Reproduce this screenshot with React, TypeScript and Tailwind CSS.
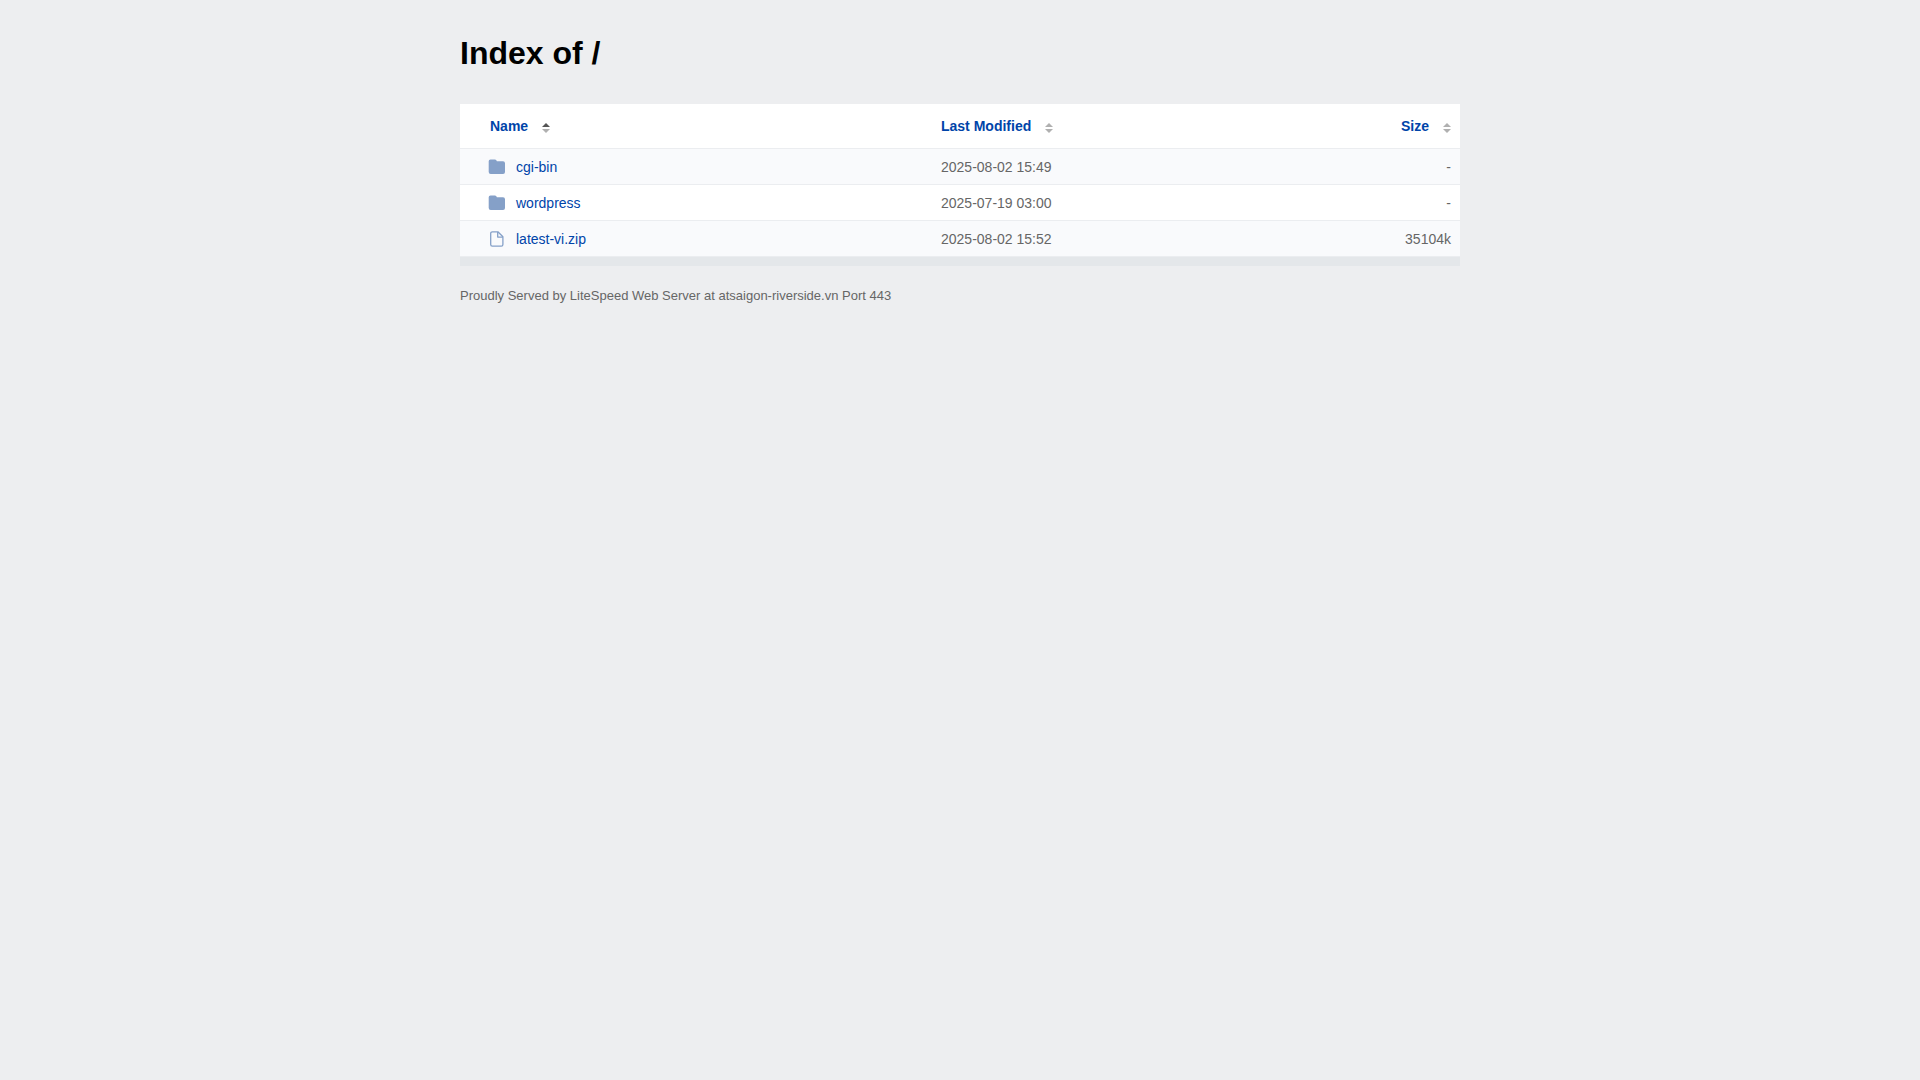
type Entry = {
  name: string;
  type: "folder" | "file";
  modified: string;
  size: string;
};

const entries: Entry[] = [
  { name: "cgi-bin", type: "folder", modified: "2025-08-02 15:49", size: "-" },
  { name: "wordpress", type: "folder", modified: "2025-07-19 03:00", size: "-" },
  { name: "latest-vi.zip", type: "file", modified: "2025-08-02 15:52", size: "35104k" },
];

const FolderIcon = () => (
  <svg className="h-4 w-[18px] shrink-0" viewBox="0 0 18 16" fill="#85a0c8" aria-hidden="true">
    <path d="M2.5.4h4.400c.6 0 1 .2 1.300.7l.5.9c.1.2.3.3.6.3h5.700A2 2 0 0 1 17 4.300v8.700a2 2 0 0 1-2 2H2.700a2 2 0 0 1-2-2V2.200A1.800 1.800 0 0 1 2.500.4z" />
  </svg>
);

const FileIcon = () => (
  <svg
    className="h-4 w-[18px] shrink-0"
    viewBox="0 0 18 16"
    fill="none"
    stroke="#85a0c8"
    strokeWidth="1.300"
    strokeLinejoin="round"
    aria-hidden="true"
  >
    <path d="M4.300.8h5.600l5 5v7.800a1.600 1.600 0 0 1-1.600 1.600h-9a1.600 1.600 0 0 1-1.600-1.600V2.400A1.600 1.600 0 0 1 4.300.8z" />
    <path d="M9.700.9v5.200h5.200" />
  </svg>
);

const SortIcon = ({ active = false }: { active?: boolean }) => (
  <svg className="mt-[3px] h-[10px] w-2" viewBox="0 0 8 10" aria-hidden="true">
    <path d="M4 0l4 4H0z" fill={active ? "#555" : "#b0b0b0"} />
    <path d="M0 6h8l-4 4z" fill="#b0b0b0" />
  </svg>
);

const SortButton = ({ label, active }: { label: string; active?: boolean }) => (
  <button type="button" className="inline-flex cursor-pointer items-center gap-[14px] align-top font-bold text-[#0044a9]">
    {label}
    <SortIcon active={active} />
  </button>
);

export default function App() {
  return (
    <div className="min-h-screen bg-[#edeef0] px-5 pt-[33px] font-['Liberation_Sans',Arial,sans-serif] text-sm text-[#666]">
      <main className="mx-auto max-w-[1000px]">
        <h1 className="mb-[31px] text-[32px] leading-10 font-bold text-black">Index of /</h1>

        <div className="border-b-[9px] border-[#e4e7ea] bg-white">
          <table className="w-full table-fixed border-separate border-spacing-0 border-b border-[#ebedf0]">
            <thead>
              <tr className="h-11">
                <th aria-sort="ascending" className="w-[47%] pl-[30px] text-left">
                  <SortButton label="Name" active />
                </th>
                <th className="pl-[11px] text-left">
                  <SortButton label="Last Modified" />
                </th>
                <th className="w-[20%] pr-[9px] text-right">
                  <SortButton label="Size" />
                </th>
              </tr>
            </thead>
            <tbody>
              {entries.map((entry) => (
                <tr key={entry.name} className="h-9 odd:bg-[#f9fafc]">
                  <td className="border-t border-[#ebedf0] pl-7">
                    <a
                      href={`/${entry.name}`}
                      className="inline-flex items-center gap-[10px] align-middle text-[#0044a9] hover:underline"
                    >
                      {entry.type === "folder" ? <FolderIcon /> : <FileIcon />}
                      {entry.name}
                    </a>
                  </td>
                  <td className="border-t border-[#ebedf0] pl-[11px]">{entry.modified}</td>
                  <td className="border-t border-[#ebedf0] pr-[9px] text-right">{entry.size}</td>
                </tr>
              ))}
            </tbody>
          </table>
        </div>

        <footer className="pt-5 text-[13px] leading-5">
          Proudly Served by LiteSpeed Web Server at atsaigon-riverside.vn Port 443
        </footer>
      </main>
    </div>
  );
}
